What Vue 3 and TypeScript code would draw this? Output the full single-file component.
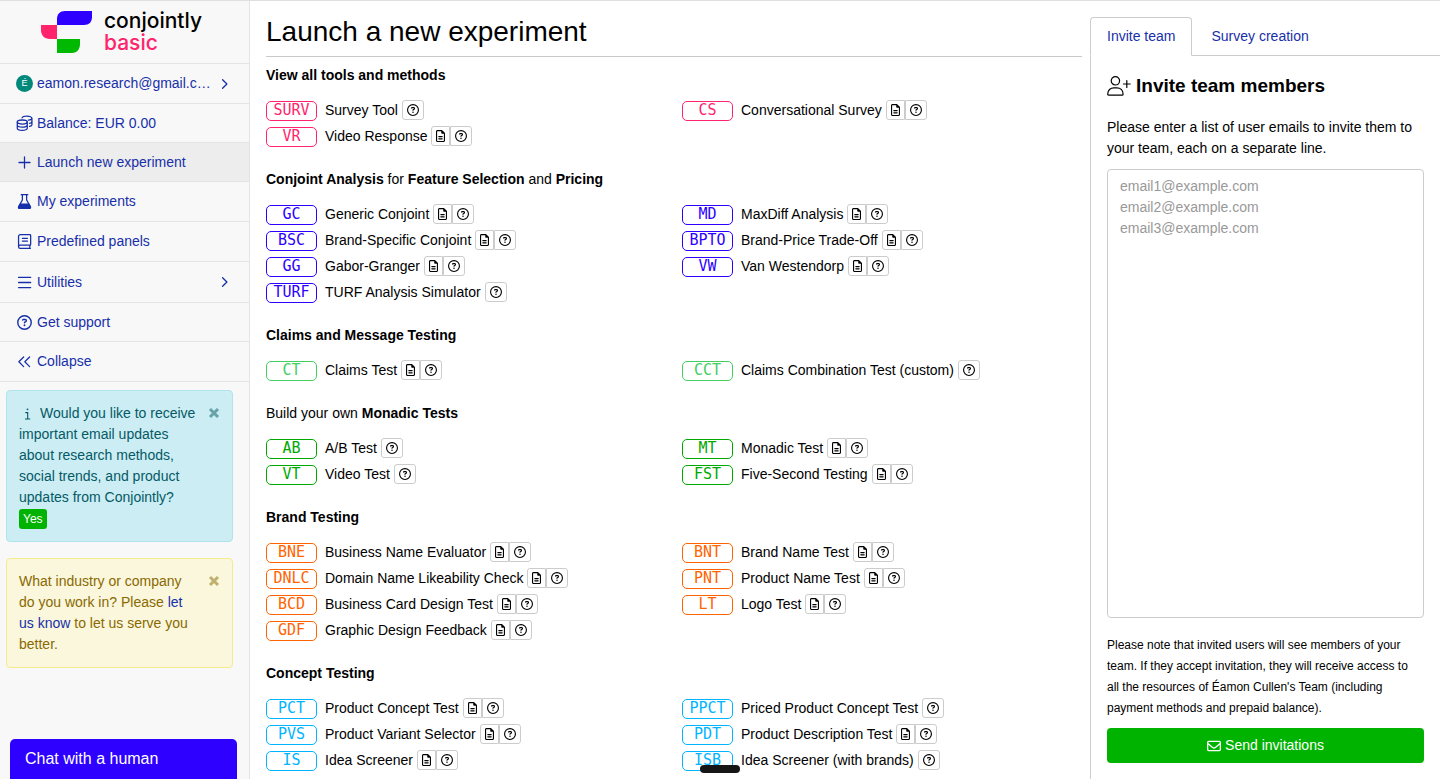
<script setup lang="ts">
import { ref } from 'vue'

interface Tool { code: string; name: string; doc?: boolean }
interface Part { text: string; bold: boolean }
interface Group { title: Part[]; tone: string; tools: Tool[] }
interface NavItem { icon: string; label: string; size?: string; active?: boolean; more?: boolean }

const nav: NavItem[] = [
  { icon: 'avatar', label: 'eamon.research@gmail.c…', more: true },
  { icon: 'coins', label: 'Balance: EUR 0.00', size: 'tight' },
  { icon: 'plus', label: 'Launch new experiment', size: 'tight', active: true },
  { icon: 'flask', label: 'My experiments' },
  { icon: 'book', label: 'Predefined panels' },
  { icon: 'bars', label: 'Utilities', size: 'loose', more: true },
  { icon: 'help', label: 'Get support', size: 'tight' },
  { icon: 'collapse', label: 'Collapse' },
]

const b = (text: string): Part => ({ text, bold: true })
const t = (text: string): Part => ({ text, bold: false })

const groups: Group[] = [
  {
    title: [b('View all tools and methods')], tone: 'pink',
    tools: [
      { code: 'SURV', name: 'Survey Tool' },
      { code: 'CS', name: 'Conversational Survey', doc: true },
      { code: 'VR', name: 'Video Response', doc: true },
    ],
  },
  {
    title: [b('Conjoint Analysis'), t(' for '), b('Feature Selection'), t(' and '), b('Pricing')], tone: 'blue',
    tools: [
      { code: 'GC', name: 'Generic Conjoint', doc: true },
      { code: 'MD', name: 'MaxDiff Analysis', doc: true },
      { code: 'BSC', name: 'Brand-Specific Conjoint', doc: true },
      { code: 'BPTO', name: 'Brand-Price Trade-Off', doc: true },
      { code: 'GG', name: 'Gabor-Granger', doc: true },
      { code: 'VW', name: 'Van Westendorp', doc: true },
      { code: 'TURF', name: 'TURF Analysis Simulator' },
    ],
  },
  {
    title: [b('Claims and Message Testing')], tone: 'mint',
    tools: [
      { code: 'CT', name: 'Claims Test', doc: true },
      { code: 'CCT', name: 'Claims Combination Test (custom)' },
    ],
  },
  {
    title: [t('Build your own '), b('Monadic Tests')], tone: 'green',
    tools: [
      { code: 'AB', name: 'A/B Test' },
      { code: 'MT', name: 'Monadic Test', doc: true },
      { code: 'VT', name: 'Video Test' },
      { code: 'FST', name: 'Five-Second Testing', doc: true },
    ],
  },
  {
    title: [b('Brand Testing')], tone: 'orange',
    tools: [
      { code: 'BNE', name: 'Business Name Evaluator', doc: true },
      { code: 'BNT', name: 'Brand Name Test', doc: true },
      { code: 'DNLC', name: 'Domain Name Likeability Check', doc: true },
      { code: 'PNT', name: 'Product Name Test', doc: true },
      { code: 'BCD', name: 'Business Card Design Test', doc: true },
      { code: 'LT', name: 'Logo Test', doc: true },
      { code: 'GDF', name: 'Graphic Design Feedback', doc: true },
    ],
  },
  {
    title: [b('Concept Testing')], tone: 'sky',
    tools: [
      { code: 'PCT', name: 'Product Concept Test', doc: true },
      { code: 'PPCT', name: 'Priced Product Concept Test' },
      { code: 'PVS', name: 'Product Variant Selector', doc: true },
      { code: 'PDT', name: 'Product Description Test', doc: true },
      { code: 'IS', name: 'Idea Screener', doc: true },
      { code: 'ISB', name: 'Idea Screener (with brands)' },
    ],
  },
]

const helpPath = 'M464 256A208 208 0 1 0 48 256a208 208 0 1 0 416 0zM0 256a256 256 0 1 1 512 0A256 256 0 1 1 0 256zm169.8-90.7c7.9-22.3 29.1-37.3 52.8-37.3h58.3c34.9 0 63.1 28.3 63.1 63.1c0 22.6-12.1 43.5-31.7 54.8L280 264.4c-.2 13-10.9 23.6-24 23.6c-13.3 0-24-10.7-24-24V250.5c0-8.6 4.6-16.5 12.1-20.8l44.3-25.4c4.7-2.7 7.6-7.7 7.6-13.1c0-8.4-6.8-15.1-15.1-15.1H222.6c-3.4 0-6.4 2.1-7.5 5.3l-.4 1.2c-4.4 12.5-18.2 19-30.6 14.6s-19-18.2-14.6-30.6l.4-1.2zM224 352a32 32 0 1 1 64 0 32 32 0 1 1 -64 0z'
const docPath = 'M64 464c-8.8 0-16-7.2-16-16V64c0-8.8 7.2-16 16-16H224v80c0 17.7 14.3 32 32 32h80V448c0 8.8-7.2 16-16 16H64zM64 0C28.7 0 0 28.7 0 64V448c0 35.3 28.7 64 64 64H320c35.3 0 64-28.7 64-64V154.5c0-17-6.7-33.3-18.7-45.3L274.7 18.7C262.7 6.7 246.5 0 229.5 0H64zm56 256c-13.3 0-24 10.7-24 24s10.7 24 24 24H264c13.3 0 24-10.7 24-24s-10.7-24-24-24H120zm0 96c-13.3 0-24 10.7-24 24s10.7 24 24 24H264c13.3 0 24-10.7 24-24s-10.7-24-24-24H120z'
const mailPath = 'M64 112c-8.8 0-16 7.2-16 16v22.1L220.5 291.7c20.7 17 50.4 17 71.1 0L464 150.1V128c0-8.8-7.2-16-16-16H64zM48 212.2V384c0 8.8 7.2 16 16 16H448c8.8 0 16-7.2 16-16V212.2L322 328.8c-38.4 31.5-93.7 31.5-132 0L48 212.2zM0 128C0 92.7 28.7 64 64 64H448c35.3 0 64 28.7 64 64V384c0 35.3-28.7 64-64 64H64c-35.3 0-64-28.7-64-64V128z'

const emails = ref('')
</script>

<template>
  <div class="page">
    <aside class="sidebar">
      <a class="logo" href="#" aria-label="Conjointly basic">
        <svg class="logo-mark" viewBox="0 0 52 42" aria-hidden="true">
          <path fill="#2d00ff" d="M16 14V8c0-5 3-8 8-8h27v6c0 5-3 8-8 8z" />
          <path fill="#ff246c" d="M0 14h16v14H9c-6 0-9-4-9-9z" />
          <path fill="#00b900" d="M16 28h23v5c0 5-3 9-8 9H16z" />
        </svg>
        <span class="logo-text"><span>conjointly</span><span class="logo-plan">basic</span></span>
      </a>

      <nav>
        <a v-for="item in nav" :key="item.label" href="#" class="nav-item" :class="[item.size, { active: item.active }]">
          <span v-if="item.icon === 'avatar'" class="avatar">É</span>
          <svg v-else-if="item.icon === 'help'" class="nav-icon" viewBox="-36 -36 584 584"><path fill="currentColor" :d="helpPath" /></svg>
          <svg v-else class="nav-icon" viewBox="0 0 16 16" fill="none" stroke="currentColor" stroke-width="1.2" stroke-linecap="round" stroke-linejoin="round">
            <template v-if="item.icon === 'coins'">
              <ellipse cx="5.9" cy="6.6" rx="4.7" ry="1.9" />
              <path d="M1.2 6.6v5.9c0 1.1 2.1 2 4.7 2s4.7-.9 4.7-2V6.6M1.2 9.5c0 1.1 2.1 2 4.7 2s4.700-.9 4.700-2M5.700 2.700c.4-1 2.300-1.600 4.600-1.600 2.600 0 4.700.8 4.700 1.900s-1.600 1.700-3.300 1.900M15 3v6.200c0 .8-1 1.300-2.200 1.600M15 6.100c0 .8-1 1.400-2.200 1.700" />
            </template>
            <path v-else-if="item.icon === 'plus'" d="M8 2.800v10.400M2.800 8h10.400" />
            <template v-else-if="item.icon === 'flask'">
              <path d="M4.900 1.600h6.200M6 1.600v5l-3.500 6.200c-.5.900 0 1.700 1 1.700h9c1 0 1.500-.8 1-1.700L10 6.600v-5" />
              <path fill="currentColor" d="M4 10.400h8l1.600 3-.8 1.100H3.200l-.8-1.100z" />
            </template>
            <path v-else-if="item.icon === 'book'" d="M13.500 11.500H3.900a1.500 1.500 0 0 0 0 3h9.600M2.400 13V3.200a1.700 1.700 0 0 1 1.700-1.700h8.900c.5 0 .8.300.8.800v8.400c0 .5-.3.800-.8.800V14.500M6 5h4.800M6 7.600h4.800" />
            <path v-else-if="item.icon === 'bars'" d="M2.400 3.200h11.400M2.400 8h11.400M2.400 12.800h11.400" />
            <path v-else d="M7.200 3.800L2.700 8.300l4.500 4.500M12.800 3.800L8.300 8.300l4.500 4.500" />
          </svg>
          <span class="nav-label">{{ item.label }}</span>
          <svg v-if="item.more" class="chevron" viewBox="0 0 8 12" fill="none" stroke="currentColor" stroke-width="1.3" stroke-linecap="round" stroke-linejoin="round"><path d="M1.600 1.700L5.900 6l-4.300 4.300" /></svg>
        </a>
      </nav>

      <section class="alert info">
        <button class="close" type="button" aria-label="Dismiss">
          <svg viewBox="0 0 12 12"><path d="M2 2l8 8M10 2l-8 8" /></svg>
        </button>
        <svg class="info-icon" viewBox="0 0 7 12" fill="none" stroke="currentColor" stroke-width="1.100" aria-hidden="true"><path d="M1.300 4.600h2.400v6.300M1 11h5.200" /><circle cx="3.500" cy="1.300" r=".9" fill="currentColor" stroke="none" /></svg>Would you like to receive important email updates about research methods, social trends, and product updates from Conjointly?
        <button class="yes" type="button">Yes</button>
      </section>

      <section class="alert warning">
        <button class="close" type="button" aria-label="Dismiss">
          <svg viewBox="0 0 12 12"><path d="M2 2l8 8M10 2l-8 8" /></svg>
        </button>
        What industry or company do you work in? Please <a href="#">let us know</a> to let us serve you better.
      </section>
    </aside>

    <main class="main">
      <h1>Launch a new experiment</h1>
      <section v-for="(group, i) in groups" :key="i" class="group" :class="group.tone">
        <h2><template v-for="part in group.title" :key="part.text"><b v-if="part.bold">{{ part.text }}</b><template v-else>{{ part.text }}</template></template></h2>
        <div class="tools">
          <div v-for="tool in group.tools" :key="tool.code" class="tool">
            <a class="tool-link" href="#"><span class="code">{{ tool.code }}</span><span>{{ tool.name }}</span></a>
            <span class="actions">
              <button v-if="tool.doc" class="doc" type="button" aria-label="Sample report"><svg viewBox="0 0 384 512"><path fill="currentColor" :d="docPath" /></svg></button>
              <button class="help" type="button" aria-label="Help"><svg viewBox="0 0 512 512"><path fill="currentColor" :d="helpPath" /></svg></button>
            </span>
          </div>
        </div>
      </section>
    </main>

    <aside class="panel">
      <nav class="tabs">
        <a class="tab current" href="#">Invite team</a>
        <a class="tab" href="#">Survey creation</a>
      </nav>
      <form class="invite" @submit.prevent>
        <h3>
          <svg viewBox="0 0 24 20" fill="none" stroke="currentColor" stroke-width="1.200" stroke-linecap="round" stroke-linejoin="round" aria-hidden="true">
            <circle cx="8.400" cy="4.800" r="4.200" />
            <path d="M.7 18.200c0-4 2.800-6.300 6.200-6.300h3c3.400 0 6.200 2.300 6.200 6.300 0 .6-.4 1-1 1H1.700c-.6 0-1-.4-1-1zM19.800 4.600v6.800M16.400 8h6.800" />
          </svg>
          Invite team members
        </h3>
        <label for="emails">Please enter a list of user emails to invite them to your team, each on a separate line.</label>
        <textarea id="emails" v-model="emails" placeholder="email1@example.com&#10;email2@example.com&#10;email3@example.com"></textarea>
        <p class="note">Please note that invited users will see members of your team. If they accept invitation, they will receive access to all the resources of Éamon Cullen's Team (including payment methods and prepaid balance).</p>
        <button class="send" type="submit"><svg viewBox="0 0 512 512" aria-hidden="true"><path fill="currentColor" :d="mailPath" /></svg>Send invitations</button>
      </form>
    </aside>

    <button class="chat" type="button">Chat with a human</button>
    <div class="grip"></div>
  </div>
</template>

<style>
body {
  background: #fff;
}
</style>

<style scoped>
* {
  box-sizing: border-box;
}
button,
textarea {
  font: inherit;
  margin: 0;
}
button {
  cursor: pointer;
}
a {
  color: #172fa9;
  text-decoration: none;
}
.page {
  display: grid;
  grid-template-columns: 250px 1fr 350px;
  min-height: 100vh;
  border-top: 1px solid #dfdfdf;
  font: 14px/21px "Liberation Sans", Arial, sans-serif;
  color: #000;
}

.sidebar {
  background: #f8f8f8;
  border-right: 1px solid #e4e4e4;
}
.logo {
  display: flex;
  align-items: center;
  gap: 11px;
  height: 63px;
  padding-left: 41px;
  border-bottom: 1px solid #e4e4e4;
  color: #000;
}
.logo-mark {
  width: 52px;
  height: 42px;
}
.logo-text {
  display: flex;
  flex-direction: column;
  font: 500 21px/22px Inter, sans-serif;
}
.logo-plan {
  color: #ff246c;
}
.nav-item {
  display: flex;
  align-items: center;
  height: 40px;
  padding: 0 20px 0 16px;
  border-bottom: 1px solid #e4e4e4;
}
.nav-item.tight {
  height: 39px;
}
.nav-item.loose {
  height: 41px;
}
.nav-item.active {
  background: #ededed;
}
.nav-icon {
  width: 17px;
  height: 17px;
  margin-right: 4px;
}
.avatar {
  width: 17px;
  height: 17px;
  margin-right: 4px;
  border-radius: 50%;
  background: #00897b;
  color: #fff;
  font-size: 9px;
  line-height: 17px;
  text-align: center;
}
.nav-label {
  flex: 1;
  white-space: nowrap;
}
.chevron {
  width: 8px;
  height: 12px;
}

.alert {
  position: relative;
  margin: 8px 16px 16px 6px;
  padding: 12px 36px 12px 12px;
  border: 1px solid;
  border-radius: 4px;
}
.info {
  background: #ccedf3;
  border-color: #b0e4ed;
  color: #045a66;
}
.warning {
  background: #faf7dd;
  border-color: #f5ea8d;
  color: #8a6900;
}
.info-icon {
  width: 7px;
  height: 12px;
  margin: 0 9px 0 5px;
  vertical-align: -2px;
}
.close {
  position: absolute;
  top: 16px;
  right: 12px;
  width: 12px;
  height: 12px;
  padding: 0;
  border: 0;
  background: none;
  color: inherit;
  opacity: 0.5;
}
.close svg {
  display: block;
  width: 12px;
  height: 12px;
  stroke: currentColor;
  stroke-width: 3;
}
.yes {
  display: block;
  height: 20px;
  margin-top: 1px;
  padding: 0 4px;
  border: 0;
  border-radius: 3px;
  background: #00b300;
  color: #fff;
  font-size: 12px;
  line-height: 20px;
}

.main {
  padding: 0 8px 0 16px;
}
h1 {
  margin: 0 0 8px;
  padding: 13px 0 7px;
  border-bottom: 1px solid #c8c8c8;
  font-size: 28px;
  line-height: 35px;
  font-weight: 400;
}
h2 {
  margin: 0 0 11px;
  font-size: 14px;
  line-height: 21px;
  font-weight: 400;
}
.group {
  padding-bottom: 20px;
}
.group:last-child {
  padding-bottom: 0;
}
.tools {
  display: grid;
  grid-template-columns: 1fr 1fr;
  column-gap: 16px;
}
.tool {
  display: flex;
  align-items: center;
  gap: 4px;
  height: 26px;
}
.tool-link {
  display: flex;
  align-items: center;
  gap: 8px;
  color: #000;
}
.code {
  width: 51px;
  height: 20px;
  margin-top: 2px;
  border: 1px solid currentColor;
  border-radius: 5px;
  font: 15px/17px "DejaVu Sans Mono", monospace;
  text-align: center;
}
.pink .code { color: #ff246c; }
.blue .code { color: #2d00ff; }
.mint .code { color: #43cf5f; }
.green .code { color: #00a900; }
.orange .code { color: #ff6400; }
.sky .code { color: #00b4ff; }
.actions {
  display: flex;
}
.actions button {
  display: flex;
  align-items: center;
  justify-content: center;
  height: 20px;
  padding: 0;
  border: 1px solid #ccc;
  border-radius: 3px;
  background: #fff;
  color: #000;
}
.actions .doc {
  width: 19px;
  border-radius: 3px 0 0 3px;
}
.actions .help {
  width: 22px;
}
.actions .doc + .help {
  border-radius: 0 3px 3px 0;
}
.doc svg {
  width: 9px;
  height: 12px;
}
.help svg {
  width: 12px;
  height: 12px;
}

.panel {
  display: flex;
  flex-direction: column;
  padding-top: 16px;
}
.tabs {
  display: flex;
  gap: 2px;
  border-bottom: 1px solid #ccc;
}
.tab {
  margin-bottom: -1px;
  padding: 8px 16px;
  border: 1px solid transparent;
  border-radius: 4px 4px 0 0;
}
.tab.current {
  border-color: #ccc;
  border-bottom-color: #fff;
  background: #fff;
}
.invite {
  flex: 1;
  display: flex;
  flex-direction: column;
  padding: 16px;
  border-left: 1px solid #ccc;
}
h3 {
  display: flex;
  align-items: center;
  gap: 5px;
  margin: 0 0 17px;
  font-size: 19px;
  line-height: 28px;
}
h3 svg {
  width: 24px;
  height: 20px;
}
label {
  margin-bottom: 10px;
}
textarea {
  flex: 1;
  width: 100%;
  min-height: 120px;
  padding: 6px 12px;
  border: 1px solid #ccc;
  border-radius: 4px;
  resize: none;
}
textarea::placeholder {
  color: #999;
}
.note {
  margin: 17px 0 9px;
  padding-right: 8px;
  font-size: 12px;
  line-height: 21px;
}
.send {
  display: flex;
  align-items: center;
  justify-content: center;
  gap: 4px;
  height: 35px;
  border: 0;
  border-radius: 4px;
  background: #00b300;
  color: #fff;
}
.send svg {
  width: 14px;
  height: 14px;
}

.chat {
  position: fixed;
  left: 10px;
  bottom: 0;
  width: 227px;
  height: 40px;
  padding: 0 15px 2px;
  border: 0;
  border-radius: 5px 5px 0 0;
  background: #2d00ff;
  color: #fff;
  font-size: 16px;
  text-align: left;
}
.grip {
  position: fixed;
  left: 50%;
  bottom: 6px;
  width: 40px;
  height: 8px;
  margin-left: -20px;
  border-radius: 4px;
  background: #161616;
}
</style>
